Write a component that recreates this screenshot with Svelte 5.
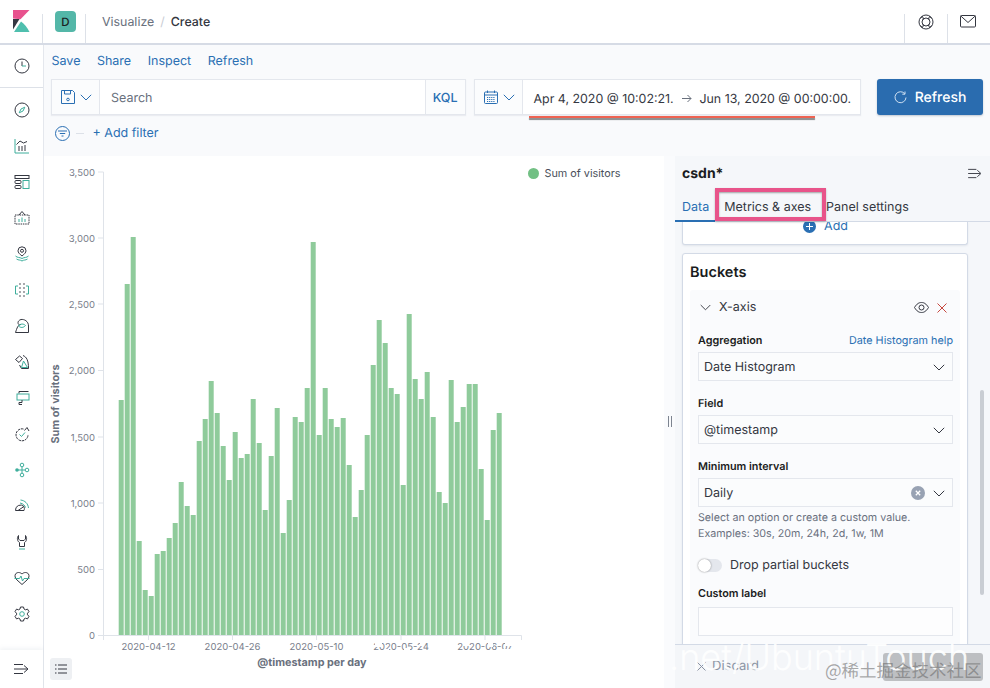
<script>
  const tops = [400,284,237,541,590,596,554,551,538,523,482,506,515,441,419,381,413,446,480,432,458,454,399,443,510,456,408,533,500,417,422,388,242,435,388,419,427,418,465,517,490,435,365,320,343,388,394,485,314,379,399,372,417,492,503,380,422,407,384,384,469,520,430,413];
  const bars = tops.map((t, i) => ({ x: 118.7 + i * 6, y: t, h: 635 - t }));
  const yTicks = [['3,500',172],['3,000',238],['2,500',304],['2,000',370.5],['1,500',437],['1,000',503],['500',569.5],['0',635.5]];
  const xTicks = [['2020-04-12',148.5],['2020-04-26',232.5],['2020-05-10',316.5],['2020-05-24',401],['2020-06-07',485]];
  const wipes = [[375,642,7,5],[384,649,5,4],[398,642,4,3],[404,648,6,5],[420,642,3,4],[436,643,14,3],[394,650,40,1],[463,643,6,3],[488,642,5,5],[497,649,14,2],[505,642,8,4]];
  const navIcons = ['compass','chart','dash','canvas','maps','ml','graph','siem','infra','uptime','apm','signal','wrench','heart','gear'];
</script>

<div class="app">
  <header class="top">
    <div class="logo-cell">
      <svg width="17" height="22" viewBox="0 0 17 22" class="logo">
        <polygon points="0,0 16.500,0 7.500,9.300 0,8.500" fill="#E8528E"/>
        <polygon points="0,9 6.500,9 0,19.500" fill="#343741"/>
        <path d="M1 22 H 16.500 Q 13 15 8 11.500 Z" fill="#4FBFAE"/>
      </svg>
    </div>
    <div class="space-cell"><span class="avatar">D</span></div>
    <nav class="crumbs"><span class="muted">Visualize</span><span class="slash">/</span><span class="cur">Create</span></nav>
    <div class="top-btn">
      <svg width="16" height="16" viewBox="0 0 16 16" fill="none" stroke="#343741" stroke-width="1">
        <circle cx="8" cy="8" r="7"/><circle cx="8" cy="8" r="4"/>
        <path d="M2.300 4.500 4.500 2.300 5.600 5.600M13.700 4.500 11.500 2.300 10.400 5.600M2.300 11.500 4.500 13.700 5.600 10.400M13.700 11.500 11.500 13.700 10.400 10.400"/>
      </svg>
    </div>
    <div class="top-btn mail">
      <svg width="16" height="13" viewBox="0 0 16 13" fill="none" stroke="#343741" stroke-width="1">
        <rect x=".5" y=".5" width="15" height="11.500" rx="1"/><path d="M.8 1 8 7.500 15.200 1"/>
      </svg>
    </div>
  </header>

  <div class="body">
    <aside class="side">
      <div class="recent">
        <svg width="16" height="16" viewBox="0 0 16 16" fill="none" stroke="#343741"><circle cx="8" cy="8" r="7"/><path d="M8 3.500V8" /><path d="M8 8h4" stroke="#3EAE9C"/></svg>
      </div>
      <div class="nav">
        {#each navIcons as n}
          <span class="nav-i">
            <svg width="16" height="16" viewBox="0 0 16 16" fill="none" stroke="#343741" stroke-width="1">
              {#if n === 'compass'}
                <circle cx="8" cy="8" r="7"/><path d="M10.800 5.200 9 9 5.200 10.800 7 7Z" stroke="#3EAE9C"/>
              {:else if n === 'chart'}
                <path d="M1 1v14h14" stroke="#3EAE9C"/><path d="M2.500 6.500 6 3l3.500 2 3.500-1.500" /><path d="M5 8v5M8 8v5M11 7v6"/>
              {:else if n === 'dash'}
                <rect x="1" y="1.500" width="14" height="3"/><rect x="1" y="6.500" width="6" height="3" rx="1"/><rect x="1" y="11.500" width="6" height="3" rx="1"/><rect x="9" y="6.500" width="6" height="8" stroke="#3EAE9C"/>
              {:else if n === 'canvas'}
                <path d="M1 5h14v9H1z" stroke-dasharray="1.500 .8"/><path d="M5 5 8 1.500 11 5"/><path d="M5 12V9M8 12V7.500M11 12V9" stroke="#3EAE9C"/>
              {:else if n === 'maps'}
                <path d="M8 10C5.500 8 4 6.500 4 4.800A4 4 0 0 1 12 4.800C12 6.500 10.500 8 8 10Z"/><circle cx="8" cy="4.800" r="1.500"/><path d="M1.500 10c2 2 4 1 6.500 2.500C10.500 11 12.500 12 14.500 10M2.500 13c2 1.500 3.500.5 5.500 2 2-1.500 3.500-.5 5.500-2" stroke="#3EAE9C"/>
              {:else if n === 'ml'}
                <path d="M4 4H1.500v8H4M12 4h2.500v8H12" stroke="#3EAE9C"/>
                <path d="M6 2h.01M10 2h.01M6 6h.01M10 6h.01M6 10h.01M10 10h.01M6 14h.01M10 14h.01" stroke-width="1.600" stroke-linecap="round"/>
              {:else if n === 'graph'}
                <path d="M7 6.500C4 6.500 3 10 1.500 14.500H14.500V8C14.500 3 10 1 7 1.500 4 2.500 3.500 4.500 4.500 6.500"/><path d="M4.500 8C6.500 5.500 9.500 5.500 11.500 7.500 9.500 10 6.500 10 4.500 8Z" stroke="#3EAE9C"/>
              {:else if n === 'siem'}
                <path d="M1.500 5.500 5.500 2 8.500 4.500 5 8.500ZM9 1.500C12.500 3 14.500 6 14.500 14.500H7.500L5.500 11"/><path d="M9.500 7 13.500 13.500H7.500Z" stroke="#3EAE9C"/>
              {:else if n === 'infra'}
                <path d="M14.500 1.500H5v2M5 12.500v2h3"/><rect x="3" y="4" width="12" height="6" stroke="#3EAE9C"/><path d="M8 10v2.500H5"/>
              {:else if n === 'uptime'}
                <path d="M9.500 3A6 6 0 1 0 14 8.500" stroke-dasharray="2.500 .8"/><path d="M5.500 8.500l2 2 3.500-4" stroke="#3EAE9C"/><path d="M10.500 4.500 13 1.500 15 5"/>
              {:else if n === 'apm'}
                <g stroke="#3EAE9C"><circle cx="8" cy="3" r="1.800"/><circle cx="8" cy="13" r="1.800"/><circle cx="13" cy="8" r="1.800"/><path d="M4 8H11M8 5v6"/></g><circle cx="3" cy="8" r="1.800" fill="#3EAE9C" stroke="none"/>
              {:else if n === 'signal'}
                <path d="M1.500 12.500A5 5 0 0 1 10 8.500L4 12.500M1.500 12.500H10C10.500 11 10.500 9.800 10 8.500"/><path d="M6.500 2C11 2.500 14 5.500 14.500 10M6 5C9 5.500 11 7.500 11.500 9.500" stroke="#3EAE9C"/>
              {:else if n === 'wrench'}
                <path d="M4.500 1.500C2.500 4 3.500 7.500 5.500 8.500V12.500H10.500V8.500C12.500 7.500 13.500 4 11.500 1.500V5L10 6.500H6L4.500 5Z"/><path d="M5 15H11" stroke="#3EAE9C"/>
              {:else if n === 'heart'}
                <path d="M3 10C1 8 .5 6 1.500 4 3 2 6 2 8 4 10 2 13 2 14.500 4 15.500 6 15 8 13 10L8 14.500Z"/><path d="M.5 8.500H5.500L7 6 8.500 11 10 8.500H15.500" stroke="#3EAE9C"/>
              {:else}
                <path d="M6.500 1h3l.5 2 1.500.8 2-.7 1.500 2.600-1.500 1.500v1.600l1.500 1.500-1.500 2.600-2-.7-1.500.8-.5 2h-3l-.5-2-1.500-.8-2 .7L1 10.300l1.500-1.500V7.200L1 5.700l1.500-2.600 2 .7L6 3Z"/><circle cx="8" cy="8" r="2.300" stroke="#3EAE9C"/>
              {/if}
            </svg>
          </span>
        {/each}
      </div>
      <div class="dock">
        <svg width="15" height="12" viewBox="0 0 15 12" fill="none" stroke="#343741"><path d="M0 1.500h9M0 6h13M0 10.500h9M10 2.500 14 6l-4 3.500"/></svg>
      </div>
    </aside>

    <main class="main">
      <div class="toolbar">
        <div class="menu">
          <span>Save</span><span>Share</span><span>Inspect</span><span>Refresh</span>
        </div>
        <div class="query">
          <div class="group g-left">
            <span class="pre">
              <svg width="14" height="14" viewBox="0 0 14 14" fill="none" stroke="#2A6FB3"><path d="M.5.500h11l2 2v11H.5z"/><path d="M3.500.8v3.200h6V.8"/><circle cx="7" cy="9.500" r="1.300"/></svg>
              <svg class="chev" width="12" height="7" viewBox="0 0 12 7" fill="none" stroke="#2A6FB3"><path d="M.8.8 6 6l5.200-5.200"/></svg>
            </span>
            <span class="search">Search</span>
            <span class="kql">KQL</span>
          </div>
          <div class="group g-date">
            <span class="pre cal">
              <svg width="14" height="14" viewBox="0 0 14 14" fill="none" stroke="#2A6FB3"><rect x=".5" y="2" width="13" height="11.500" rx="1"/><path d="M.5 5h13M3.500.5V3M10.500.5V3"/><path d="M3 7.500h8M3 9.500h8M3 11.500h8" stroke-dasharray="1.200 .9"/></svg>
              <svg class="chev" width="12" height="7" viewBox="0 0 12 7" fill="none" stroke="#2A6FB3"><path d="M.8.8 6 6l5.200-5.200"/></svg>
            </span>
            <span class="range">
              <span>Apr 4, 2020 @ 10:02:21.</span>
              <svg width="10" height="9" viewBox="0 0 10 9" fill="none" stroke="#69707D"><path d="M0 4.500h9M5.500 1 9 4.500 5.500 8"/></svg>
              <span>Jun 13, 2020 @ 00:00:00.</span>
            </span>
          </div>
          <button class="refresh">
            <svg width="13" height="13" viewBox="0 0 13 13" fill="none" stroke="#cfe0f2"><path d="M10.800 2.800A5.500 5.500 0 1 0 12 6.500"/><path d="M11 .5v2.700H8.300"/></svg>
            <span>Refresh</span>
          </button>
        </div>
        <div class="filters">
          <svg width="15" height="15" viewBox="0 0 15 15" fill="none" stroke="#2A6FB3"><circle cx="7.500" cy="7.500" r="7"/><path d="M3 5h9M4.800 7.500h5.400M6.500 10h2"/></svg>
          <i class="dash"></i>
          <span class="add">+ Add filter</span>
        </div>
      </div>

      <div class="work">
        <section class="chart">
          <svg class="plot" width="620" height="532" viewBox="44 156 620 532">
            <rect x="44" y="156" width="620" height="532" fill="#fff"/>
            <path d="M103.500 172V640M98 172H103.500M98 238H103.500M98 304H103.500M98 370.500H103.500M98 437H103.500M98 503H103.500M98 569.500H103.500M98 635.500H521.500V640M148.500 635.500V640M232.500 635.500V640M316.500 635.500V640M401 635.500V640M485 635.500V640" fill="none" stroke="#DFE3E9"/>
            {#each bars as b}
              <rect x={b.x} y={b.y} width="5" height={b.h} fill="#8FCB9B"/>
            {/each}
            {#each yTicks as t}
              <text x="95" y={t[1] + 3.500} text-anchor="end" class="tick">{t[0]}</text>
            {/each}
            {#each xTicks as t}
              <text x={t[1]} y="650" text-anchor="middle" class="tick">{t[0]}</text>
            {/each}
            {#each wipes as w}
              <rect x={w[0]} y={w[1]} width={w[2]} height={w[3]} fill="#fff"/>
            {/each}
            <text x="58.500" y="404" text-anchor="middle" transform="rotate(-90 58.500 404)" class="axis">Sum of visitors</text>
            <text x="312" y="666" text-anchor="middle" class="axis">@timestamp per day</text>
            <circle cx="533.500" cy="173.500" r="5.500" fill="#72C084"/>
            <text x="544.500" y="177" class="legend">Sum of visitors</text>
          </svg>
          <span class="legend-btn">
            <svg width="12" height="10" viewBox="0 0 12 10" fill="none" stroke="#343741"><path d="M3 1h9M3 5h9M3 9h9"/><path d="M0 1h1.500M0 5h1.500M0 9h1.500"/></svg>
          </span>
          <span class="resizer"></span>
        </section>

        <aside class="panel">
          <span class="gutter"></span>
          <div class="p-main">
            <div class="p-head">
              <b>csdn*</b>
              <svg width="14" height="11" viewBox="0 0 15 12" fill="none" stroke="#343741"><path d="M0 1.500h9M0 6h13M0 10.500h9M10 2.500 14 6l-4 3.500"/></svg>
            </div>
            <div class="tabs">
              <span class="tab on">Data</span><span class="tab">Metrics &amp; axes</span><span class="tab">Panel settings</span>
            </div>
            <div class="scroller">
              <div class="card first">
                <span class="addrow">
                  <svg width="13" height="13" viewBox="0 0 13 13"><circle cx="6.500" cy="6.500" r="6.500" fill="#2A6FB3"/><path d="M6.500 3v7M3 6.500h7" stroke="#fff"/></svg>
                  <span>Add</span>
                </span>
              </div>
              <div class="card">
                <h3>Buckets</h3>
                <div class="agg">
                  <div class="agg-head">
                    <svg width="11" height="7" viewBox="0 0 12 7" fill="none" stroke="#343741"><path d="M.8.8 6 6l5.200-5.200"/></svg>
                    <span class="agg-name">X-axis</span>
                    <svg class="eye" width="15" height="11" viewBox="0 0 15 11" fill="none" stroke="#343741"><path d="M.5 5.500C3 1.500 5 .5 7.500.5s4.500 1 7 5c-2.500 4-4.500 5-7 5s-4.500-1-7-5Z"/><circle cx="7.500" cy="5.500" r="2.500"/></svg>
                    <svg width="10" height="10" viewBox="0 0 10 10" fill="none" stroke="#C7483F" stroke-width="1"><path d="M.5.500l9 9M9.500.500l-9 9"/></svg>
                  </div>
                  <div class="lab"><b>Aggregation</b><a>Date Histogram help</a></div>
                  <div class="sel"><span>Date Histogram</span><svg width="12" height="7" viewBox="0 0 12 7" fill="none" stroke="#343741"><path d="M.8.8 6 6l5.200-5.200"/></svg></div>
                  <div class="lab"><b>Field</b></div>
                  <div class="sel"><span>@timestamp</span><svg width="12" height="7" viewBox="0 0 12 7" fill="none" stroke="#343741"><path d="M.8.8 6 6l5.200-5.200"/></svg></div>
                  <div class="lab"><b>Minimum interval</b></div>
                  <div class="sel"><span>Daily</span>
                    <svg class="clear" width="14" height="14" viewBox="0 0 14 14"><circle cx="7" cy="7" r="7" fill="#98A2B3"/><path d="M4.800 4.800l4.400 4.400M9.200 4.800l-4.400 4.400" stroke="#fff" stroke-width="1.300"/></svg>
                    <svg width="12" height="7" viewBox="0 0 12 7" fill="none" stroke="#343741"><path d="M.8.8 6 6l5.200-5.200"/></svg>
                  </div>
                  <p class="hint">Select an option or create a custom value.<br/>Examples: 30s, 20m, 24h, 2d, 1w, 1M</p>
                  <div class="switch"><span class="track"><i></i></span><span>Drop partial buckets</span></div>
                  <div class="lab last"><b>Custom label</b></div>
                  <div class="sel empty"></div>
                </div>
              </div>
            </div>
            <span class="thumb"></span>
            <div class="foot">
              <span class="discard">
                <svg width="9" height="9" viewBox="0 0 9 9" fill="none" stroke="#8a93a3"><path d="M.5.500l8 8M8.500.500l-8 8"/></svg>
                <span>Discard</span>
              </span>
              <span class="apply"></span>
            </div>
          </div>
        </aside>
      </div>
    </main>
  </div>

  <span class="mark-box"></span>
  <span class="mark-line"></span>
  <span class="wm-white">.net/UbuntuTouch</span>
  <span class="wm-cn">@稀土掘金技术社区</span>
</div>

<style>
  :global(body) { margin: 0; background: #fff; }
  .app {
    position: relative; width: 990px; height: 688px; overflow: hidden;
    display: flex; flex-direction: column;
    font-family: Inter, "Noto Sans", sans-serif; color: #343741; font-size: 12.500px;
    text-rendering: geometricPrecision;
  }
  .app svg text { text-rendering: geometricPrecision; }
  .top { height: 43px; flex: none; display: flex; background: #fff; border-bottom: 2px solid #D6DBE5; box-sizing: content-box; }
  .logo-cell { width: 43px; flex: none; position: relative; display: flex; justify-content: center; padding-top: 10px; box-sizing: border-box; }
  .logo-cell::after, .space-cell::after { content: ""; position: absolute; right: 0; top: 14px; bottom: 0; width: 1px; background: #DDE1E8; }
  .logo { margin-left: -1px; }
  .space-cell { width: 43px; flex: none; position: relative; display: flex; justify-content: center; padding: 11px 0 0 2px; box-sizing: border-box; }
  .avatar { width: 21px; height: 21px; border-radius: 4px; background: #54B7A8; color: #1a1c21; font-size: 11.500px; font-weight: 500; display: flex; align-items: center; justify-content: center; }
  .crumbs { flex: 1; display: flex; align-items: center; padding: 0 0 0 16px; height: 43px; font-size: 12.400px; }
  .muted { color: #69707D; }
  .slash { color: #C8CCD4; margin: 0 6px; }
  .cur { color: #343741; font-weight: 500; }
  .top-btn { width: 43px; flex: none; display: flex; justify-content: center; padding-top: 14px; box-sizing: border-box; position: relative; }
  .top-btn::before { content: ""; position: absolute; left: 0; top: 14px; bottom: 0; width: 1px; background: #DDE1E8; }
  .top-btn.mail { padding: 15px 2px 0 0; }

  .body { flex: 1; display: flex; min-height: 0; }
  .side { width: 44px; flex: none; background: #fff; border-right: 1px solid #E4E7ED; box-sizing: border-box; display: flex; flex-direction: column; }
  .recent { height: 43px; border-bottom: 1px solid #DDE1E8; display: flex; align-items: center; justify-content: center; flex: none; box-sizing: border-box; }
  .nav { flex: 1; display: flex; flex-direction: column; padding-top: 4px; align-items: center; }
  .nav-i { height: 36px; flex: none; display: flex; align-items: center; justify-content: center; }
  .dock { height: 38px; flex: none; display: flex; align-items: center; justify-content: center; box-shadow: 0 -2px 4px rgba(152,162,179,.12); }

  .main { flex: 1; min-width: 0; display: flex; flex-direction: column; }
  .toolbar { height: 111px; flex: none; background: #F9FAFC; box-sizing: border-box; padding: 5px 7px 0 7.500px; }
  .menu { display: flex; gap: 16.500px; height: 22px; align-items: center; color: #2A6FB3; }
  .query { display: flex; margin-top: 7px; height: 36px; margin-left: -.5px; }
  .group { display: flex; align-items: stretch; background: #fff; border: 1px solid #E4E7ED; box-sizing: border-box; box-shadow: 0 1px 1px rgba(152,162,179,.15); }
  .g-left { width: 415px; }
  .g-date { width: 388px; margin-left: 8px; }
  .pre { display: flex; align-items: center; gap: 5px; padding-left: 9px; width: 48px; flex: none; box-sizing: border-box; background: #FBFCFD; border-right: 1px solid #E4E7ED; }
  .search { flex: 1; display: flex; align-items: center; padding: 3px 0 0 11px; color: #69707D; }
  .kql { width: 39px; flex: none; display: flex; align-items: center; justify-content: center; padding-top: 2px; color: #2A6FB3; background: #FBFCFD; border-left: 1px solid #E4E7ED; font-weight: 500; }
  .range { flex: 1; display: flex; align-items: center; justify-content: space-between; padding: 2px 9px 0 11px; font-size: 12.400px; white-space: nowrap; color: #343741; }
  .refresh { margin-left: 16px; width: 106px; border: 0; border-radius: 3px; background: #2A6CAF; color: #fff; font: 500 14px Inter, sans-serif; text-rendering: geometricPrecision; display: flex; align-items: center; justify-content: center; gap: 8px; padding: 1px 0 0; box-shadow: 0 1px 2px rgba(60,80,110,.3); }
  .filters { display: flex; align-items: center; height: 20px; margin-top: 8px; padding-left: 3px; color: #2A6FB3; }
  .dash { width: 8px; height: 1px; background: #DDE1E8; margin: 0 9px 0 6px; }

  .work { flex: 1; display: flex; min-height: 0; }
  .chart { width: 620px; flex: none; position: relative; background: #fff; }
  .plot { display: block; }
  .tick { font: 9.500px Inter, sans-serif; fill: #7a808c; }
  .axis { font: 700 10.800px Inter, sans-serif; fill: #69707D; }
  .legend { font: 10.800px Inter, sans-serif; fill: #4A4F5A; }
  .legend-btn { position: absolute; left: 6px; top: 502px; width: 22px; height: 22px; background: #EEF0F3; border-radius: 3px; display: flex; align-items: center; justify-content: center; }
  .resizer { position: absolute; left: 624px; top: 260px; width: 4px; height: 11px; border: solid #7d8490; border-width: 0 1px; box-sizing: border-box; }

  .panel { flex: 1; min-width: 0; display: flex; background: #FAFBFD; }
  .gutter { width: 11px; flex: none; }
  .p-main { flex: 1; position: relative; min-width: 0; background: #F5F7FA; display: flex; flex-direction: column; }
  .p-head { height: 35px; flex: none; display: flex; justify-content: space-between; align-items: center; padding: 0 8px 0 7px; font-size: 14px; color: #1a1c21; box-sizing: border-box; }
  .tabs { height: 31px; flex: none; display: flex; align-items: center; border-bottom: 1px solid #D3DAE6; box-sizing: border-box; }
  .tab { height: 100%; display: flex; align-items: center; padding-top: 2px; box-sizing: border-box; color: #343741; }
  .tab.on { color: #2A6FB3; border-bottom: 2px solid #2A6FB3; padding: 3px 6px 0 7px; margin-bottom: -1px; height: calc(100% + 1px); }
  .tab:nth-child(2) { margin-left: 9px; }
  .tab:nth-child(3) { margin-left: 15px; }
  .scroller { flex: 1; min-height: 0; overflow: hidden; padding: 0 22px 0 7px; }
  .card { background: #fff; border: 1px solid #D3DAE6; border-radius: 3px; box-sizing: border-box; box-shadow: 0 1px 2px rgba(152,162,179,.2); }
  .card.first { height: 23px; border-top: 0; border-radius: 0 0 3px 3px; margin-bottom: 8px; display: flex; justify-content: center; align-items: flex-start; }
  .addrow { display: flex; align-items: center; gap: 8px; color: #2A6FB3; height: 8px; margin-left: 1px; }
  .card h3 { margin: 0; padding: 10px 7px 0; font-size: 14.500px; font-weight: 600; color: #1a1c21; height: 36px; box-sizing: border-box; line-height: 18px; }
  .agg { margin: 0 7px; background: #FAFBFD; padding: 0 7px 30px 8px; border-radius: 3px; }
  .agg-head { height: 35px; display: flex; align-items: center; padding: 0 6px 0 2px; box-sizing: border-box; }
  .agg-name { flex: 1; margin-left: 8px; }
  .eye { margin-right: 8px; }
  .lab { display: flex; justify-content: space-between; align-items: flex-end; height: 34px; box-sizing: border-box; padding-bottom: 4px; font-size: 10.800px; line-height: 14px; color: #1a1c21; }
  .agg-head + .lab { height: 27px; }
  .lab.last { padding-bottom: 6px; }
  .lab b { font-weight: 600; }
  .lab a { color: #2A6FB3; }
  .sel { height: 29px; background: #FBFCFD; border: 1px solid #E4E7ED; box-sizing: border-box; display: flex; align-items: center; padding: 1px 7px 0 5px; gap: 8px; }
  .sel span { flex: 1; }
  .clear { flex: none; }
  .empty { background: #FDFDFE; }
  .hint { margin: 3px 0 0; font-size: 10.700px; line-height: 16px; color: #69707D; }
  .switch { display: flex; align-items: center; gap: 8px; margin-top: 15px; height: 16px; }
  .track { width: 24px; height: 13px; border-radius: 7px; background: #E4E7ED; position: relative; flex: none; }
  .track i { position: absolute; left: 0; top: 0; width: 13px; height: 13px; border-radius: 50%; background: #fff; box-shadow: 0 0 2px rgba(0,0,0,.45); }
  .thumb { position: absolute; left: 305px; top: 234px; width: 4px; height: 205px; background: #C9CDD3; border-radius: 2px; }
  .foot { position: absolute; left: 0; right: 0; top: 488px; bottom: 0; background: #F4F6F9; border-top: 1px solid #D3DAE6; }
  .discard { position: absolute; left: 22px; top: 13px; color: #8a93a3; font-size: 13px; display: flex; align-items: center; gap: 6px; }
  .apply { position: absolute; left: 208px; top: 8px; width: 100px; height: 28px; border-radius: 3px; background: #BDBFC2; filter: blur(.6px); }

  .mark-box { position: absolute; left: 715px; top: 188px; width: 111px; height: 33px; box-sizing: border-box; border: 4px solid #E8548A; box-shadow: inset 0 1px 2px rgba(0,0,0,.35), 0 1px 2px rgba(0,0,0,.25); pointer-events: none; }
  .mark-line { position: absolute; left: 529px; top: 115.500px; width: 286px; height: 2.500px; background: #EE6352; box-shadow: 0 2px 1px rgba(40,40,40,.55); pointer-events: none; }
  .wm-white { position: absolute; left: 669px; top: 635px; font: 300 36px/44px Inter, "Noto Sans", sans-serif; color: rgba(255,255,255,.92); white-space: nowrap; pointer-events: none; }
  .wm-cn { position: absolute; left: 825px; top: 660px; font: 17.500px/22px "Noto Sans CJK SC", sans-serif; color: rgba(110,110,110,.6); white-space: nowrap; pointer-events: none; }
</style>
